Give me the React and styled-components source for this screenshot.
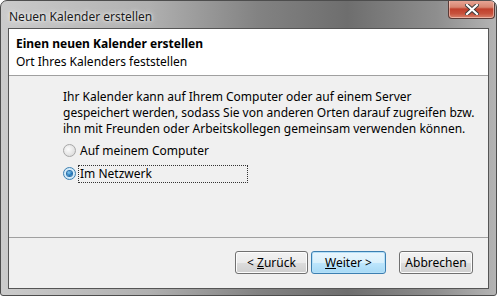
import React, { useState } from 'react'
import styled, { createGlobalStyle } from 'styled-components'

const Global = createGlobalStyle`
  html, body {
    margin: 0;
    padding: 0;
    background: #ffffff;
  }
  body {
    font-family: "Noto Sans", "Open Sans", sans-serif;
    font-size: 12px;
    color: #000;
  }
`

const Frame = styled.div`
  width: 497px;
  height: 296px;
  box-sizing: border-box;
  padding: 0 7px 6px;
  display: flex;
  flex-direction: column;
  border-radius: 7px 7px 3px 3px;
  border: 1px solid #4d4d4d;
  background: linear-gradient(90deg, #cbcbcb 0%, #b0b0b0 30%, #828282 52%, #6e6e6e 70%, #8e8e8e 88%, #b4b4b4 100%);
  overflow: hidden;
`

const TitleBar = styled.div`
  height: 27px;
  display: flex;
  align-items: flex-start;
  justify-content: space-between;
  margin: 0 -6px 0 0;
`

const Title = styled.div`
  padding: 7px 0 0 1px;
  font-size: 12px;
  color: #1a1a1a;
  text-shadow: 0 0 6px rgba(255, 255, 255, 0.9), 0 0 3px rgba(255, 255, 255, 0.9);
`

const CloseButton = styled.div`
  width: 45px;
  height: 18px;
  margin-top: -1px;
  border: 1px solid #5a3a36;
  border-top: none;
  border-radius: 0 0 4px 4px;
  background: linear-gradient(180deg, #e9a99a 0%, #d88570 40%, #c0402c 50%, #c7513c 75%, #d8826c 100%);
  box-shadow: inset 0 0 0 1px rgba(255, 220, 210, 0.55);
  display: flex;
  align-items: center;
  justify-content: center;
`

const Client = styled.div`
  flex: 1;
  display: flex;
  flex-direction: column;
  border: 1px solid #555555;
  background: #f0f0f0;
`

const Header = styled.div`
  height: 47px;
  box-sizing: border-box;
  padding: 7px 7px 0;
  background: #ffffff;
  border-bottom: 1px solid #a0a0a0;
  display: flex;
  flex-direction: column;
  gap: 2px;
`

const HeaderTitle = styled.div`
  font-weight: bold;
  line-height: 16px;
`

const HeaderSub = styled.div`
  line-height: 16px;
`

const Body = styled.div`
  flex: 1;
  padding: 13px 0 0 54px;
  border-bottom: 1px solid #a0a0a0;
`

const Para = styled.p`
  margin: 0 0 2px;
  line-height: 16px;
`

const Option = styled.label`
  display: flex;
  align-items: center;
  height: 23px;
  gap: 2px;
`

const Dot = styled.span`
  width: 13px;
  height: 13px;
  box-sizing: border-box;
  border-radius: 50%;
  display: flex;
  align-items: center;
  justify-content: center;
  border: 1px solid ${p => (p.$on ? '#3c7fb1' : '#a7a7a7')};
  background: ${p =>
    p.$on
      ? 'radial-gradient(circle, #e6f4fc 0%, #c6e4f7 100%)'
      : 'radial-gradient(circle at 40% 40%, #fcfcfc 0%, #e0e0e0 70%, #cfcfcf 100%)'};

  &::after {
    content: '';
    display: ${p => (p.$on ? 'block' : 'none')};
    width: 5px;
    height: 5px;
    border-radius: 50%;
    background: radial-gradient(circle at 40% 35%, #8fd0f5 0%, #1a74b8 60%, #0e4f8a 100%);
    box-shadow: 0 0 0 1px #2a6ea8;
  }
`

const OptionText = styled.span`
  padding: 0 1px;
  line-height: 16px;
  border: 1px dotted ${p => (p.$focus ? '#333' : 'transparent')};
  width: ${p => (p.$focus ? '166px' : 'auto')};
`

const Footer = styled.div`
  height: 50px;
  display: flex;
  justify-content: flex-end;
  align-items: flex-start;
  padding: 13px 15px 0 0;
  box-sizing: border-box;
`

const Button = styled.button`
  width: ${p => p.$w || 74}px;
  height: 23px;
  margin-left: ${p => p.$gap || 0}px;
  padding: 0;
  font: inherit;
  color: #000;
  border-radius: 3px;
  border: 1px solid ${p => (p.$def ? '#3c7fb1' : '#707070')};
  background: ${p =>
    p.$def
      ? 'linear-gradient(180deg, #eaf6fd 0%, #d9f0fc 50%, #bee6fd 51%, #a7d9f5 100%)'
      : 'linear-gradient(180deg, #f2f2f2 0%, #ebebeb 50%, #dddddd 51%, #cfcfcf 100%)'};
  box-shadow: inset 0 0 0 1px ${p => (p.$def ? '#b5e0f8' : '#fcfcfc')};
  cursor: default;
`

const CloseX = () => (
  <svg width="14" height="11" viewBox="0 0 14 11">
    <path d="M2 1 L12 10 M12 1 L2 10" stroke="#3a3a3a" strokeWidth="4" strokeLinecap="square" />
    <path d="M2 1 L12 10 M12 1 L2 10" stroke="#ffffff" strokeWidth="2.2" strokeLinecap="square" />
  </svg>
)

const App = () => {
  const [choice, setChoice] = useState('net')

  return (
    <>
      <Global />
      <Frame>
        <TitleBar>
          <Title>Neuen Kalender erstellen</Title>
          <CloseButton>
            <CloseX />
          </CloseButton>
        </TitleBar>
        <Client>
          <Header>
            <HeaderTitle>Einen neuen Kalender erstellen</HeaderTitle>
            <HeaderSub>Ort Ihres Kalenders feststellen</HeaderSub>
          </Header>
          <Body>
            <Para>
              Ihr Kalender kann auf Ihrem Computer oder auf einem Server
              <br />
              gespeichert werden, sodass Sie von anderen Orten darauf zugreifen bzw.
              <br />
              ihn mit Freunden oder Arbeitskollegen gemeinsam verwenden können.
            </Para>
            <Option onClick={() => setChoice('local')}>
              <Dot $on={choice === 'local'} />
              <OptionText $focus={choice === 'local'}>Auf meinem Computer</OptionText>
            </Option>
            <Option onClick={() => setChoice('net')}>
              <Dot $on={choice === 'net'} />
              <OptionText $focus={choice === 'net'}>Im Netzwerk</OptionText>
            </Option>
          </Body>
          <Footer>
            <Button $w={73}>
              &lt; <u>Z</u>urück
            </Button>
            <Button $w={75} $gap={3} $def>
              <u>W</u>eiter &gt;
            </Button>
            <Button $w={74} $gap={13}>Abbrechen</Button>
          </Footer>
        </Client>
      </Frame>
    </>
  )
}

export default App
